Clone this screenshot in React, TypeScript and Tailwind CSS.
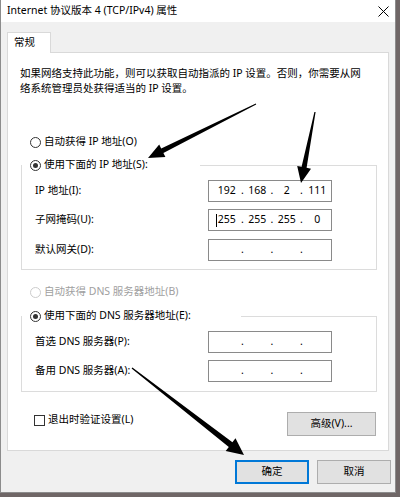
import React from 'react';

const font = { fontFamily: '"Noto Sans", "Noto Sans CJK SC", sans-serif' };

const Radio = ({ checked, disabled }: { checked?: boolean; disabled?: boolean }) => (
    <span
        className={`w-[11px] h-[11px] rounded-full border flex items-center justify-center bg-white shrink-0 ${disabled ? 'border-[#cccccc]' : 'border-[#333333]'}`}
    >
        {checked && <span className="w-[5px] h-[5px] rounded-full bg-[#333333]" />}
    </span>
);

const IpBox = ({ parts, cursor }: { parts?: string[]; cursor?: boolean }) => {
    const p = parts ?? ['', '', '', ''];
    return (
        <div className="w-[124px] h-[22px] border border-[#8a8a8a] bg-white flex items-center pl-[4px] text-[10.5px] relative">
            {cursor && <span className="absolute left-[7px] top-[4px] w-px h-[13px] bg-black" />}
            <span className="w-[28px] text-center">{p[0]}</span>
            <span className="w-[4px] text-center">.</span>
            <span className="w-[26px] text-center">{p[1]}</span>
            <span className="w-[4px] text-center">.</span>
            <span className="w-[26px] text-center">{p[2]}</span>
            <span className="w-[4px] text-center">.</span>
            <span className="w-[28px] text-center">{p[3]}</span>
        </div>
    );
};

const Field = ({ label, children }: { label: string; children: React.ReactNode }) => (
    <div className="flex items-center pl-[13px]">
        <span className="w-[173px]">{label}</span>
        {children}
    </div>
);

const Arrows = () => (
    <svg className="absolute inset-0 pointer-events-none" width="400" height="497" viewBox="0 0 400 497">
        <polygon
            fill="#000"
            points="255.8,103.6 256.2,104.4 163.4,153 165.4,157.1 148,158 159.2,144.5 161.2,148.6"
        />
        <polygon
            fill="#000"
            points="314.4,111.9 315.6,112.1 306.6,167.8 311,168.7 301,183 297.2,165.9 301.6,166.8"
        />
        <polygon
            fill="#000"
            points="132.4,367.5 131.6,368.5 228.8,447 225.7,450.9 244,455 235.5,438.3 232.4,442.2"
        />
    </svg>
);

export default function App() {
    return (
        <div className="w-[400px] h-[497px] bg-[#6f6666] relative overflow-hidden text-black" style={font}>
            <div className="w-[396px] h-[493px] flex flex-col bg-[#f0f0f0] border-l border-r border-b border-[#8c8c8c] text-[10.5px]">
                {/* Title bar */}
                <div className="h-[22px] bg-white flex items-center justify-between pl-[6px] pr-[5px] shrink-0">
                    <span className="text-[10.5px]">Internet 协议版本 4 (TCP/IPv4) 属性</span>
                    <svg width="11" height="11" viewBox="0 0 11 11" className="mr-[1px]">
                        <path d="M0.5 0.5 L10.5 10.5 M10.5 0.5 L0.5 10.5" stroke="#000" strokeWidth="1" />
                    </svg>
                </div>

                <div className="flex-1 flex flex-col pl-[6px] pr-[6px] pt-[10px]">
                    {/* Tab */}
                    <div className="w-[44px] h-[21px] bg-white border-t border-l border-r border-[#d9d9d9] flex items-center pl-[6px] -mb-px relative z-10">
                        常规
                    </div>

                    {/* Tab panel */}
                    <div className="bg-white border border-[#d9d9d9] pl-[13px] pr-[11px] pt-[13px] pb-[14px]">
                        <p className="leading-[15px] -ml-px">
                            如果网络支持此功能，则可以获取自动指派的 IP 设置。否则，你需要从网
                            <br />
                            络系统管理员处获得适当的 IP 设置。
                        </p>

                        <div className="flex items-center gap-[3px] h-[16px] mt-[38px] pl-[9px]">
                            <Radio />
                            <span>自动获得 IP 地址(O)</span>
                        </div>

                        <fieldset className="border border-[#dcdcdc] mt-[7px] pb-[8px]">
                            <legend className="w-[178px] h-[16px] flex items-center gap-[3px] pl-[8px]">
                                <Radio checked />
                                <span>使用下面的 IP 地址(S):</span>
                            </legend>
                            <div className="flex flex-col mt-[7px]">
                                <Field label="IP 地址(I):">
                                    <IpBox parts={['192', '168', '2', '111']} />
                                </Field>
                                <div className="mt-[7px]">
                                    <Field label="子网掩码(U):">
                                        <IpBox parts={['255', '255', '255', '0']} cursor />
                                    </Field>
                                </div>
                                <div className="mt-[8px]">
                                    <Field label="默认网关(D):">
                                        <IpBox />
                                    </Field>
                                </div>
                            </div>
                        </fieldset>

                        <div className="flex items-center gap-[3px] h-[16px] mt-[14px] pl-[9px] text-[#a0a0a0]">
                            <Radio disabled />
                            <span>自动获得 DNS 服务器地址(B)</span>
                        </div>

                        <fieldset className="border border-[#dcdcdc] mt-[8px] pb-[9px]">
                            <legend className="w-[219px] h-[16px] flex items-center gap-[3px] pl-[8px]">
                                <Radio checked />
                                <span>使用下面的 DNS 服务器地址(E):</span>
                            </legend>
                            <div className="flex flex-col gap-[7px] mt-[7px]">
                                <Field label="首选 DNS 服务器(P):">
                                    <IpBox />
                                </Field>
                                <Field label="备用 DNS 服务器(A):">
                                    <IpBox />
                                </Field>
                            </div>
                        </fieldset>

                        <div className="flex items-start justify-between mt-[20px] pl-[13px] pr-[1px]">
                            <div className="flex items-center gap-[3px] h-[16px]">
                                <span className="w-[11px] h-[11px] border border-[#333333] bg-white" />
                                <span>退出时验证设置(L)</span>
                            </div>
                            <button className="w-[89px] h-[24px] bg-[#e1e1e1] border border-[#adadad] flex items-center justify-center">
                                高级(V)...
                            </button>
                        </div>
                    </div>

                    {/* Dialog buttons */}
                    <div className="flex justify-end gap-[8px] mt-[9px] -mr-[2px]">
                        <button className="w-[74px] h-[24px] bg-[#e1e1e1] border-2 border-[#0078d7] flex items-center justify-center">
                            确定
                        </button>
                        <button className="w-[74px] h-[24px] bg-[#e1e1e1] border border-[#adadad] flex items-center justify-center">
                            取消
                        </button>
                    </div>
                </div>
            </div>
            <Arrows />
        </div>
    );
}
